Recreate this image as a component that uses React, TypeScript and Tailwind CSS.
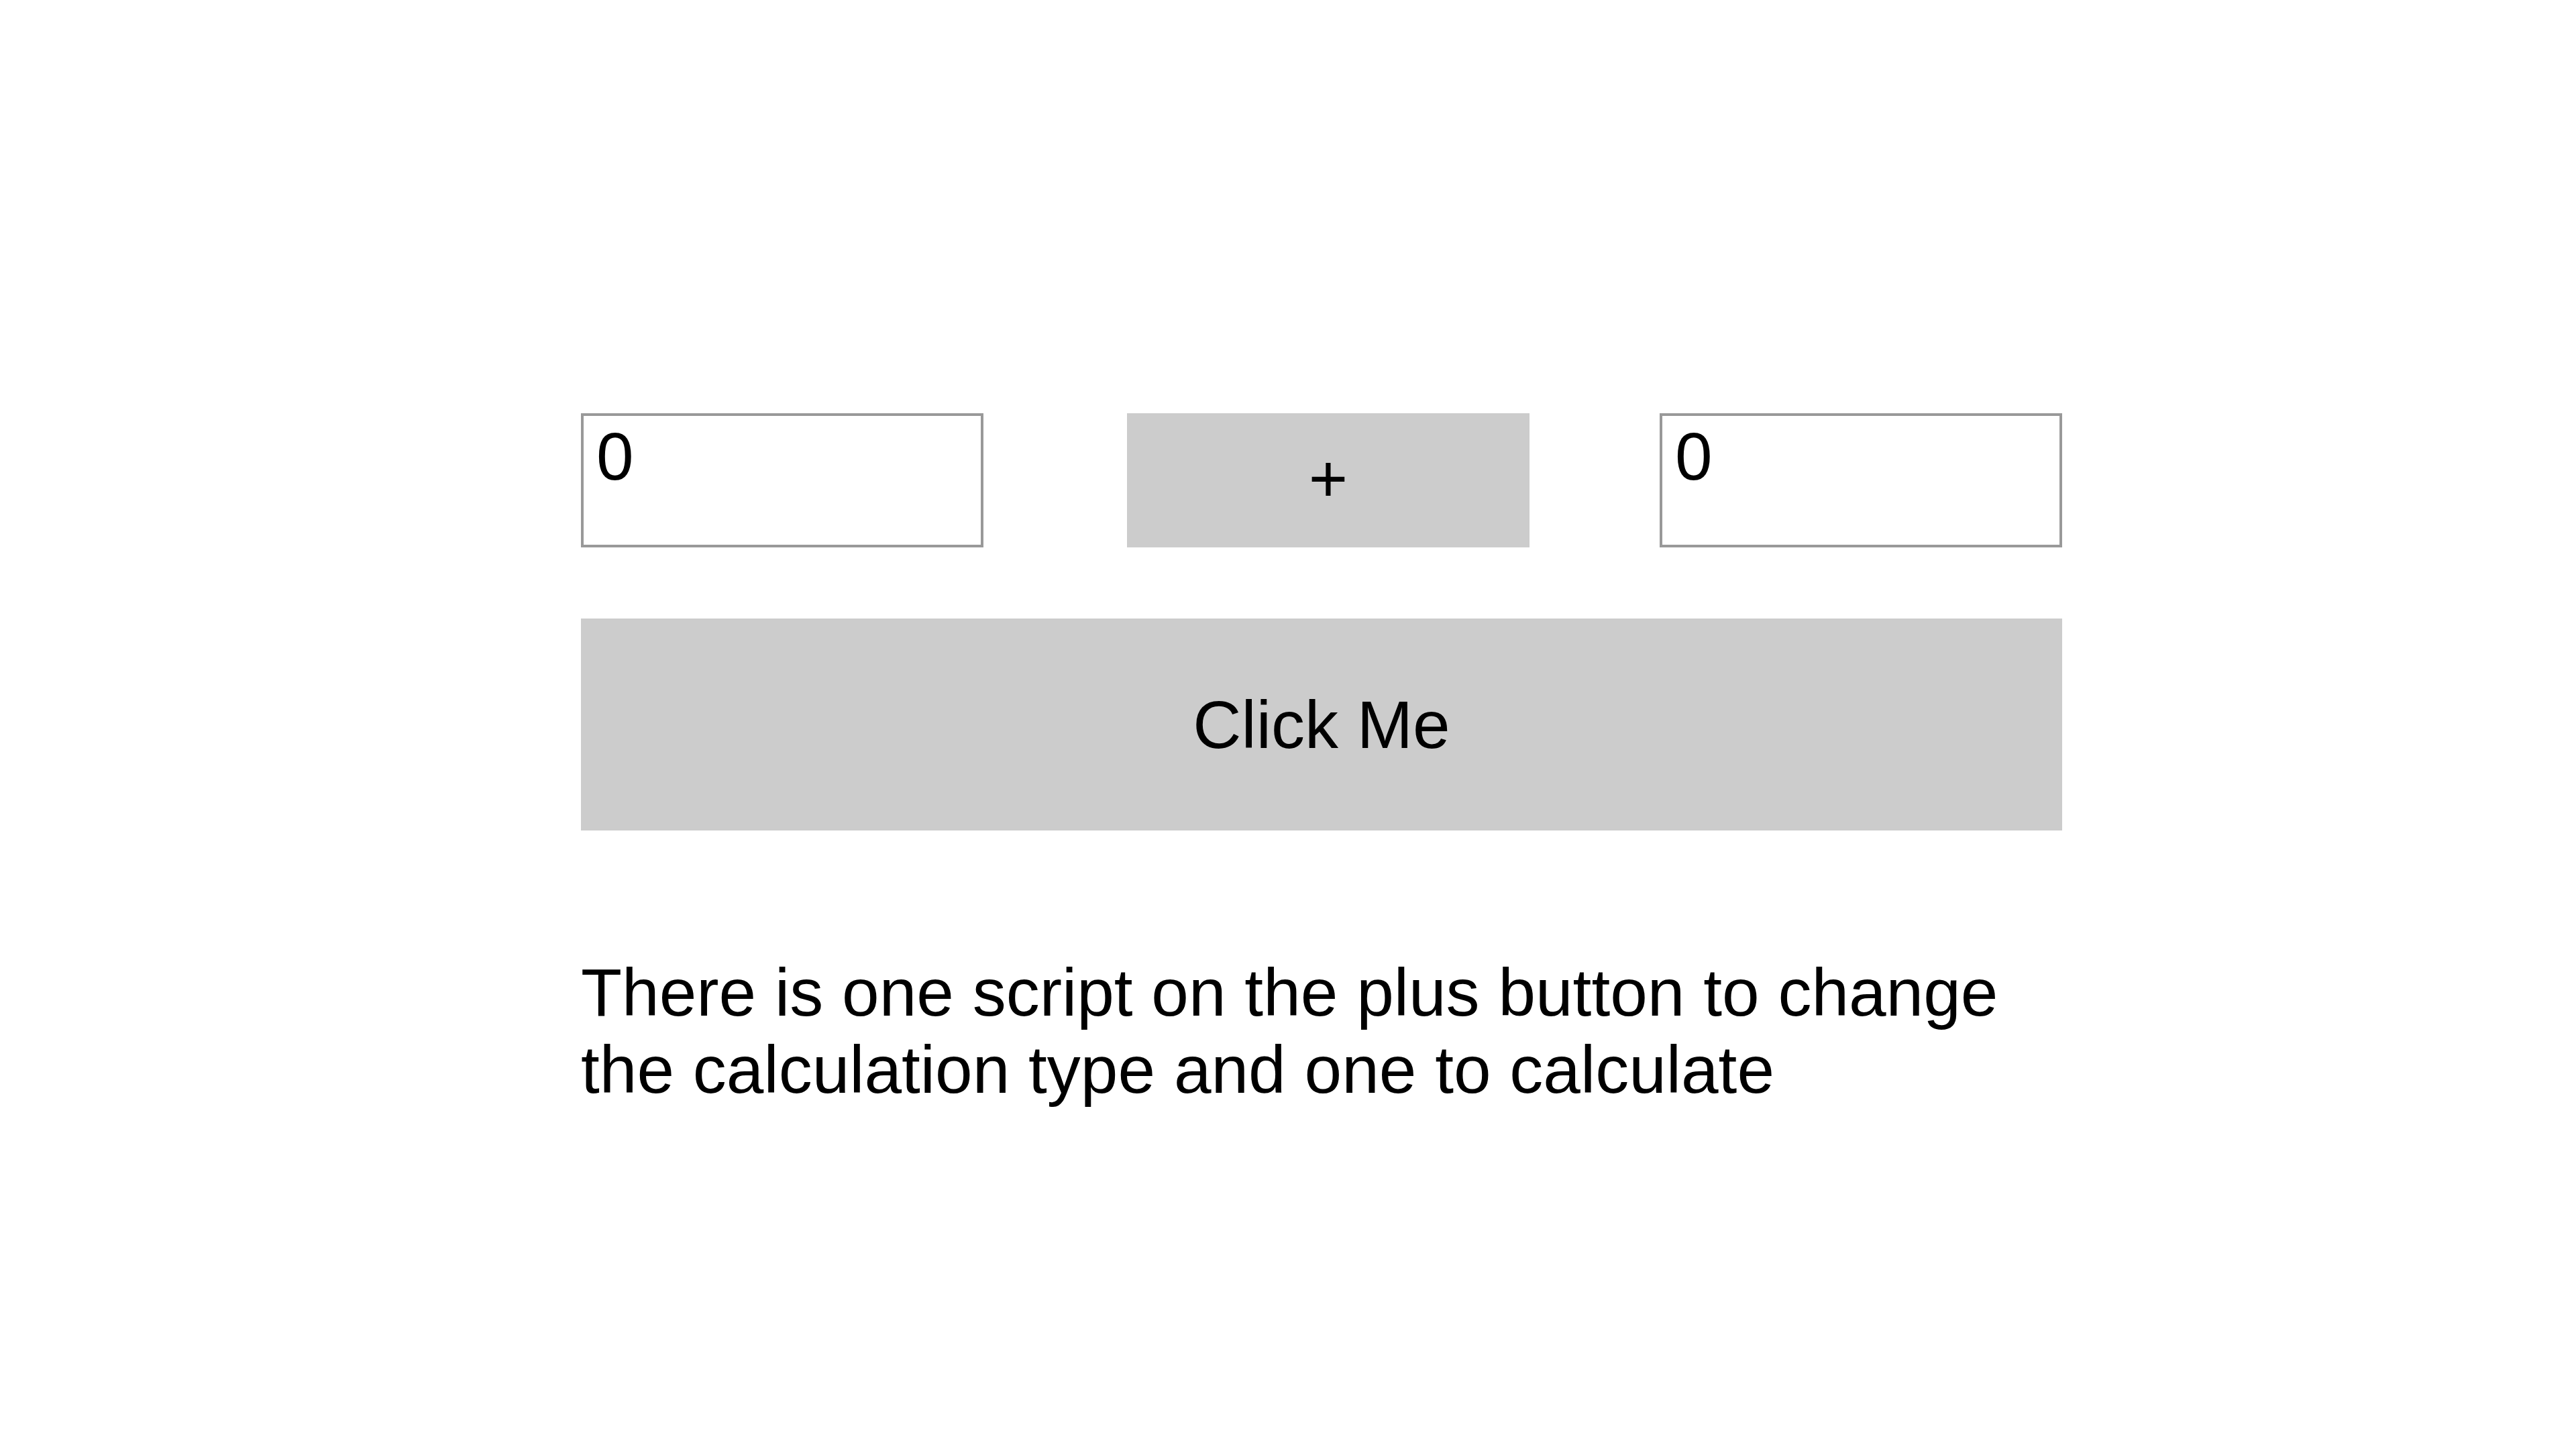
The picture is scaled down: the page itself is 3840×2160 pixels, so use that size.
import React, { useState } from 'react';

export default function App() {
  const [a, setA] = useState('0');
  const [b, setB] = useState('0');
  const [op, setOp] = useState('+');

  const ops = ['+', '-', '*', '/'];

  const nextOp = () => {
    const i = ops.indexOf(op);
    setOp(ops[(i + 1) % ops.length]);
  };

  const calculate = () => {
    const x = parseFloat(a) || 0;
    const y = parseFloat(b) || 0;
    let r = 0;
    if (op === '+') r = x + y;
    if (op === '-') r = x - y;
    if (op === '*') r = x * y;
    if (op === '/') r = y === 0 ? 0 : x / y;
    alert(r);
  };

  return (
    <div className="min-h-screen bg-white text-black font-['Liberation_Sans',Arial,sans-serif]">
      <div className="ml-[866px] pt-[616px] w-[2208px] flex flex-col">
        <div className="flex">
          <input
            type="text"
            value={a}
            onChange={(e) => setA(e.target.value)}
            className="w-[600px] h-[200px] border-4 border-[#999999] bg-white pl-[19px] pt-[3px] pb-[74px] text-[100px] leading-[1.149] outline-none"
          />
          <button
            onClick={nextOp}
            className="ml-[214px] w-[600px] h-[200px] bg-[#cccccc] pb-[5px] text-[100px] leading-[1.149]"
          >
            {op}
          </button>
          <input
            type="text"
            value={b}
            onChange={(e) => setB(e.target.value)}
            className="ml-[194px] w-[600px] h-[200px] border-4 border-[#999999] bg-white pl-[19px] pt-[3px] pb-[74px] text-[100px] leading-[1.149] outline-none"
          />
        </div>

        <button
          onClick={calculate}
          className="mt-[106px] w-full h-[316px] bg-[#cccccc] text-[100px] leading-[1.149]"
        >
          Click Me
        </button>

        <p className="mt-[184px] text-[100px] leading-[1.149]">
          There is one script on the plus button to change the calculation type and one to calculate
        </p>
      </div>
    </div>
  );
}
